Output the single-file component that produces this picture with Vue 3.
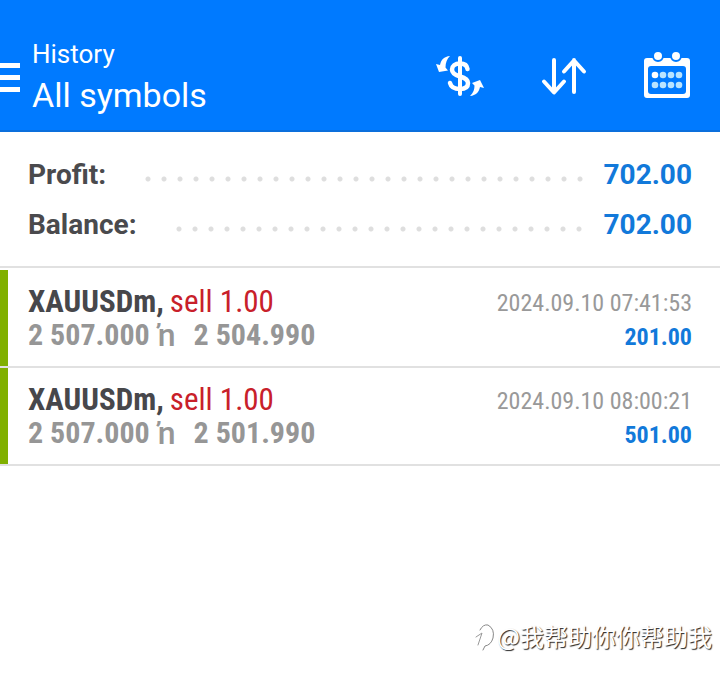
<script setup>
const totals = [
  { label: 'Profit:', value: '702.00' },
  { label: 'Balance:', value: '702.00' },
]

const deals = [
  { symbol: 'XAUUSDm,', action: 'sell 1.00', open: '2 507.000', close: '2 504.990', time: '2024.09.10 07:41:53', profit: '201.00' },
  { symbol: 'XAUUSDm,', action: 'sell 1.00', open: '2 507.000', close: '2 501.990', time: '2024.09.10 08:00:21', profit: '501.00' },
]
</script>

<template>
  <div class="screen">
    <header class="bar">
      <button class="menu" type="button" aria-label="Menu">
        <span></span><span></span><span></span>
      </button>
      <div class="titles">
        <h1>History</h1>
        <p>All symbols</p>
      </div>
      <nav class="actions">
        <button type="button" aria-label="Symbols">
          <svg width="50" height="48" viewBox="0 0 50 48" fill="none" stroke="#fff">
            <path d="M26 6V42" stroke-width="4" stroke-linecap="round" />
            <path d="M33.500 17C33 13 30 11.500 26 11.500C21 11.500 18 14 18 17.500C18 21.500 21 23 26 24.500C31 26 34 27.500 34 31C34 35 31 37 26 37C20 37 17 35 16 31" stroke-width="4.500" stroke-linecap="round" />
            <path d="M16 4C10 4.500 7 8 6 13L2 12L5 20L14 18.500L11.500 15.500C11.500 10.500 13 7 16 4Z" fill="#fff" stroke="none" />
            <path d="M36 44C39.500 41 40.500 37 40.500 33.500L38 31L46 28L50 36L46 35C45 40 42 43.500 36 44Z" fill="#fff" stroke="none" />
          </svg>
        </button>
        <button type="button" aria-label="Sort">
          <svg width="50" height="48" viewBox="0 0 50 48" fill="none" stroke="#fff" stroke-width="4" stroke-linecap="round" stroke-linejoin="round">
            <path d="M16 8V40M6 29.500L16 40.500L26 29.500" />
            <path d="M36 40V8M26 19.500L36 8.500L46 19.500" />
          </svg>
        </button>
        <button type="button" aria-label="Choose period">
          <svg width="50" height="48" viewBox="0 0 50 48">
            <path fill="#fff" fill-rule="evenodd" d="M5 6H45Q48 6 48 9V43Q48 46 45 46H5Q2 46 2 43V9Q2 6 5 6ZM9 14Q6 14 6 17V39Q6 42 9 42H41Q44 42 44 39V17Q44 14 41 14Z" />
            <g fill="#fff" stroke="#007aff" stroke-width="2">
              <circle cx="16" cy="4" r="5" /><circle cx="34" cy="4" r="5" />
            </g>
            <circle cx="13" cy="23" r="3.300" fill="#fff" />
            <g fill="#b9e4ff">
              <circle cx="21" cy="23" r="3.300" /><circle cx="29" cy="23" r="3.300" /><circle cx="37" cy="23" r="3.300" />
              <circle cx="13" cy="33" r="3.300" /><circle cx="21" cy="33" r="3.300" /><circle cx="29" cy="33" r="3.300" /><circle cx="37" cy="33" r="3.300" />
            </g>
          </svg>
        </button>
      </nav>
    </header>

    <main>
      <dl class="totals">
        <div v-for="t in totals" :key="t.label" class="total">
          <dt>{{ t.label }}</dt>
          <span class="leader"></span>
          <dd>{{ t.value }}</dd>
        </div>
      </dl>
      <ul class="deals">
        <li v-for="d in deals" :key="d.time" class="deal">
          <div>
            <p class="name"><strong>{{ d.symbol }}</strong><span>{{ d.action }}</span></p>
            <p class="prices"><span>{{ d.open }}</span><span class="arrow">ŉ</span><span>{{ d.close }}</span></p>
          </div>
          <div class="result">
            <time>{{ d.time }}</time>
            <strong>{{ d.profit }}</strong>
          </div>
        </li>
      </ul>
    </main>

    <footer class="mark">
      <svg width="24" height="30" viewBox="0 0 24 30" fill="none" stroke-linecap="round">
        <path d="M7 9Q10 3 15 4Q22 8 20 17Q18 24 12 25L10 29" stroke="#888" stroke-width="1" />
        <path d="M3 16L9 12L5 24" stroke="#999" stroke-width="1" />
      </svg>
      <span>@我帮助你你帮助我</span>
    </footer>
  </div>
</template>

<style>
body {
  margin: 0;
  background: #fff;
}
</style>

<style scoped>
.screen {
  display: flex;
  flex-direction: column;
  min-height: 100vh;
  font-family: Roboto, "Liberation Sans", sans-serif;
}
h1, p, dl, dd, ul {
  margin: 0;
  padding: 0;
}
button {
  display: block;
  padding: 0;
  border: 0;
  background: none;
}
svg {
  display: block;
  overflow: visible;
}
.bar {
  display: flex;
  align-items: center;
  box-sizing: border-box;
  padding: 34px 28px 12px 0;
  border-bottom: 2px solid #0c6fdc;
  background: #007aff;
  color: #fff;
}
.menu {
  display: grid;
  gap: 7px;
  width: 20px;
  margin-right: 12px;
  padding-top: 2px;
}
.menu span {
  height: 5px;
  background: #fff;
}
.titles {
  flex: 1;
  padding-bottom: 2px;
}
.titles h1 {
  font-size: 26px;
  font-weight: 400;
  line-height: 40px;
}
.titles p {
  font-size: 34px;
  line-height: 42px;
}
.actions {
  display: flex;
  gap: 54px;
}
.totals {
  padding: 18px 28px 16px;
  border-bottom: 2px solid #e1e1e1;
}
.total {
  display: flex;
  align-items: center;
  line-height: 50px;
  font-size: 28px;
  font-weight: 700;
  color: #4a4a4d;
}
.total dd {
  color: #1279da;
}
.leader {
  flex: 1;
  height: 6px;
  margin: 8px 16px 0 34px;
  background: radial-gradient(circle at 8px 3px, #dedede 2px, transparent 3px) left / 16px 6px repeat-x;
}
.deals {
  padding-top: 2px;
  list-style: none;
  font-family: "Roboto Condensed", "Liberation Sans Narrow", Roboto, sans-serif;
}
.deal {
  position: relative;
  display: flex;
  justify-content: space-between;
  padding: 14px 28px 12px;
  border-bottom: 2px solid #e1e1e1;
}
.deal::before {
  content: "";
  position: absolute;
  top: 0;
  bottom: 0;
  left: 0;
  width: 8px;
  background: #80b000;
}
.name, .prices {
  display: flex;
}
.name {
  gap: 6px;
  font-size: 31px;
  line-height: 36px;
  color: #c8202a;
}
.name strong {
  color: #47474b;
}
.prices {
  font-size: 30px;
  font-weight: 700;
  line-height: 30px;
  color: #969696;
}
.arrow {
  margin: 0 18px 0 8px;
  font-family: Roboto, sans-serif;
  font-size: 32px;
  font-weight: 500;
}
.result {
  display: grid;
  justify-items: end;
  padding-top: 2px;
  font-size: 24px;
  line-height: 34px;
}
.result time {
  color: #999;
}
.result strong {
  color: #1279da;
}
.mark {
  display: flex;
  align-items: center;
  justify-content: flex-end;
  margin-top: auto;
  padding: 0 8px 25px 0;
  font-family: "Noto Sans CJK SC", sans-serif;
  font-size: 24px;
  line-height: 36px;
  color: #fff;
  text-shadow: 1px 1px 1px #222;
}
</style>
